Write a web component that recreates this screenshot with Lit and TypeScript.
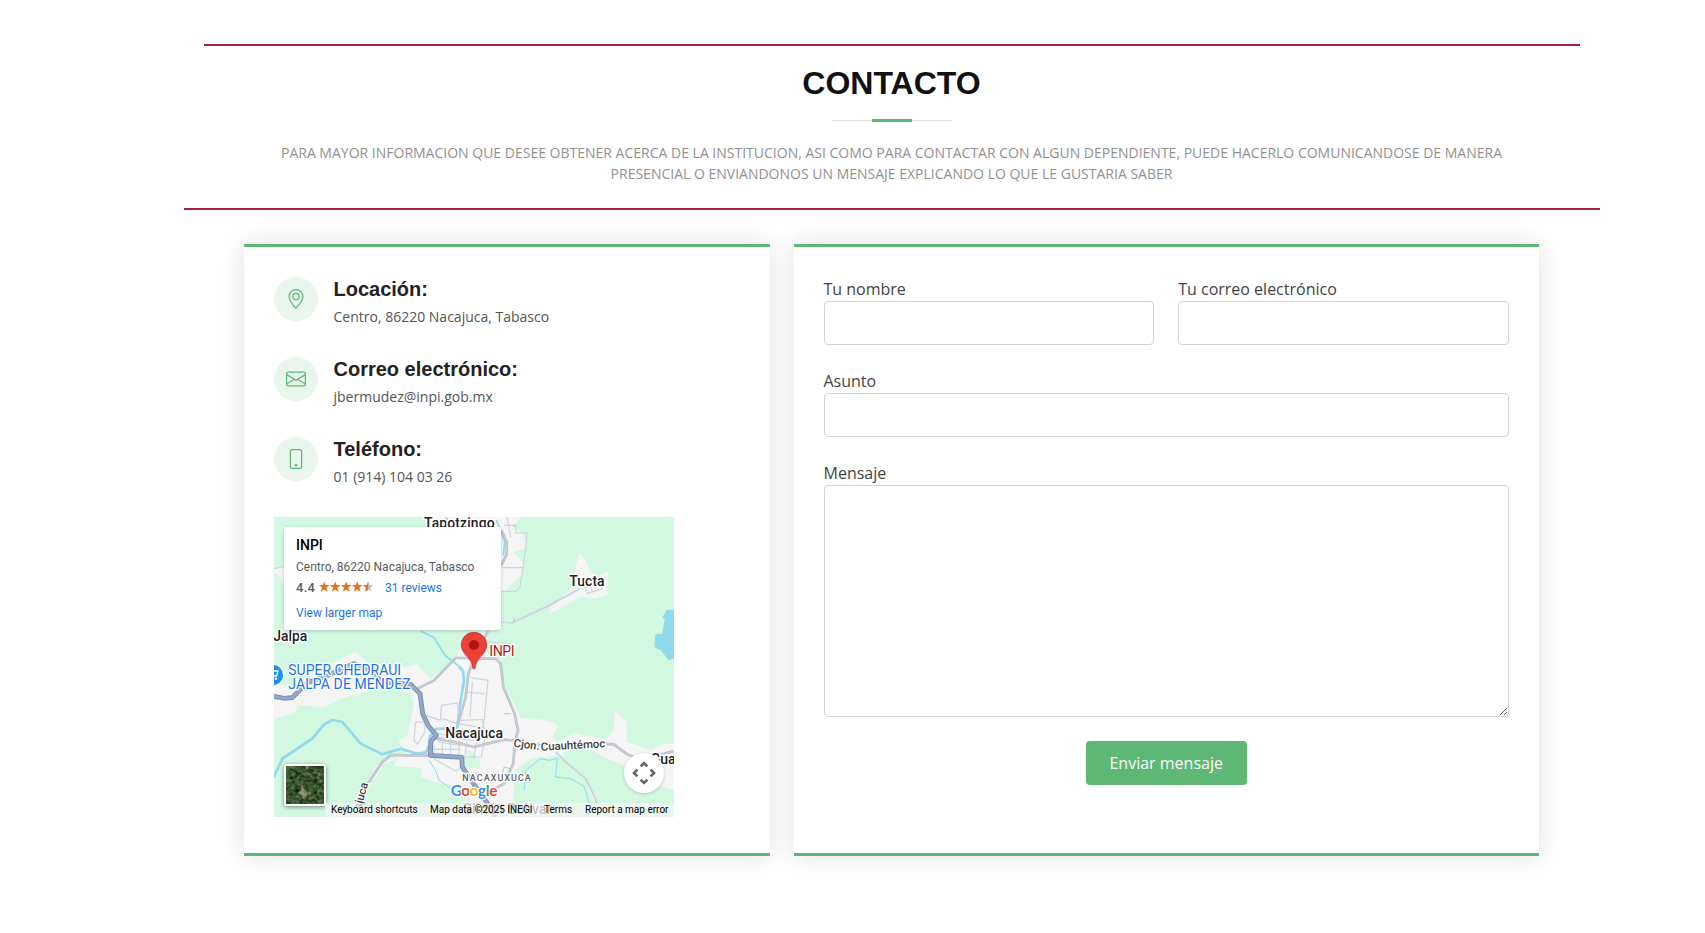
import { LitElement, html, css, svg } from "lit";
import { customElement } from "lit/decorators.js";

@customElement("location-map")
class LocationMap extends LitElement {
  static styles = css`
    :host { display: block; position: relative; width: 400px; height: 300px; overflow: hidden; background: #d2f8e2; font-family: Roboto, sans-serif; }
    .canvas { display: block; width: 400px; height: 300px; }
    .info { position: absolute; left: 10px; top: 10px; width: 217px; height: 103px; box-sizing: border-box; padding: 11px 12px; background: #fff; border-radius: 2px; box-shadow: 0 1px 4px -1px rgba(0,0,0,.3); font-size: 12px; line-height: 14px; color: #5b5b5b; white-space: nowrap; }
    .name { font-size: 14px; line-height: 15px; font-weight: 500; color: #000; }
    .addr { margin-top: 7px; line-height: 15px; }
    .rating { display: flex; align-items: center; margin-top: 6px; height: 14px; }
    .score { font-size: 13px; font-weight: 500; letter-spacing: .3px; width: 23px; }
    .stars { width: 55px; height: 12px; margin-right: 11px; margin-top: -2px; }
    .link { color: #1a73e8; }
    .larger { margin-top: 11px; }
    .thumb { position: absolute; left: 10px; top: 247px; width: 38px; height: 38px; border: 2px solid #fff; border-radius: 2px; box-shadow: 0 1px 4px rgba(0,0,0,.45); }
    .thumb svg { display: block; }
    .pan { position: absolute; left: 350px; top: 236px; width: 40px; height: 40px; border-radius: 50%; background: #fff; box-shadow: 0 1px 4px -1px rgba(0,0,0,.3); }
    .pan svg { display: block; }
    .legal { position: absolute; right: 0; bottom: 0; height: 14px; display: flex; font-size: 10px; line-height: 14px; color: #000; }
    .legal span { padding: 0 6px; background: rgba(245,245,245,.7); white-space: nowrap; box-sizing: border-box; }
    .w1 { width: 99px; } .w2 { width: 114px; } .w3 { width: 41px; } .w4 { width: 95px; }
    .land { fill: #f5f5f5; }
    .water { fill: #90daee; }
    .river { fill: none; stroke: #90daee; stroke-width: 8; stroke-linejoin: round; }
    .stream { fill: none; stroke: #90daee; stroke-width: 3; }
    .street { fill: none; stroke: #ccd5df; stroke-width: 3.5; stroke-linejoin: round; }
    .road { fill: none; stroke: #b6bcc7; stroke-width: 8; stroke-linejoin: round; }
    .roadin { fill: none; stroke: #c9ced6; stroke-width: 4; stroke-linejoin: round; }
    .main { fill: none; stroke: #7186ad; stroke-width: 14; stroke-linejoin: round; }
    .mainin { fill: none; stroke: #95a8ca; stroke-width: 9; stroke-linejoin: round; }
    .town { font: 500 42px Roboto, sans-serif; fill: #202124; stroke: #fff; stroke-width: 9; stroke-linejoin: round; paint-order: stroke; }
    .roadname { font: 500 34px Roboto, sans-serif; fill: #3c4043; stroke: #fff; stroke-width: 8; paint-order: stroke; }
    .area { font: 500 27px Roboto, sans-serif; letter-spacing: 3.1px; fill: #5b6168; stroke: #fff; stroke-width: 7; paint-order: stroke; }
    .shop { font: 400 42px Roboto, sans-serif; fill: #1a73e8; stroke: #fff; stroke-width: 8; stroke-linejoin: round; paint-order: stroke; }
    .place { font: 400 43px Roboto, sans-serif; fill: #b31412; stroke: #fff; stroke-width: 8; stroke-linejoin: round; paint-order: stroke; }
    .brand { font: 500 46px Lato, sans-serif; font-weight: 700; stroke: #fff; stroke-width: 7; stroke-linejoin: round; paint-order: stroke; }
  `;

  private star(x: number, color = "#e7711b") {
    return svg`<path transform="translate(${x} 0)" fill=${color} d="M5.2 .4 6.6 4.1H10.5L7.4 6.7 8.6 10.8 5.2 8.4 1.8 10.8 3 6.7 0 4.1H3.8Z"/>`;
  }

  render() {
    return html`
      <svg class="canvas" viewBox="0 0 1200 900">
        <g class="land">
          <path d="M470 0H740L715 30 745 48 760 90 720 105 750 140 745 170 690 225H640V120H540Z"/>
          <path d="M918 108 935 130 945 158 970 180 1004 162 998 215 1002 232 970 245 920 240 870 268 823 292 830 270 880 225 900 200 903 150Z"/>
          <path d="M0 155 30 148V195L20 180 0 168Z"/>
          <path d="M0 508 60 505 150 450 245 403 285 440 400 450 430 442 470 485 545 425 560 395 600 370 640 340 640 410 680 430 690 500 740 603 800 607 845 620 850 630 835 660 850 675 900 648 995 668 1020 640 1022 580 1058 615 1060 675 1130 700 1170 680H1200V820L1160 810 1080 790 1050 745 1000 725 930 685 870 705 865 720 920 775 965 840 990 900H930L900 840 850 800 780 760 740 770 720 900H600L580 810 500 800 440 780 445 752 360 748 370 725 330 740 280 820 250 860 270 810 310 745 400 705 380 680 372 672 400 655 420 560 410 530 340 510 250 530 190 550 150 570 75 565 60 590 0 605Z"/>
        </g>
        <path fill="#d2f8e2" d="M578 700 600 708 605 724H618V755L565 750 570 722H580ZM860 715 895 728 935 790 980 900H715L722 760 770 725Z"/>
        <path class="water" d="M1180 278H1200V425L1184 430 1160 400 1141 390 1144 352 1165 350 1172 308 1165 300Z"/>
        <path class="river" d="M0 780 25 725 70 695 115 665 150 622 175 609 205 615 260 680 325 712 380 695 430 710 457 706 465 685 467 660 485 636 550 633 556 575 570 490 567 462 555 450"/>
        <path class="river" style="stroke-width:5" d="M440 342 480 362 512 414 563 454M515 0 524 15M668 10 692 75 688 115"/>
        <path class="stream" d="M465 730 485 760 495 790 525 810M750 820 755 760 800 725 825 730 850 724M850 724 845 780 890 785 930 808 945 855M685 768 690 750 710 755V780L690 790"/>
        <g class="street">
          <path d="M690 25H725V48H758L756 90 738 210 725 223H682M682 152H750M699 0 710 60M680 315 710 318M590 482 642 490 628 632 550 620M575 525 632 530M595 495 588 600M553 610 628 608M500 610 502 565 550 558 555 592M500 610 455 595 450 625M505 605 550 620M425 614 455 616 450 650 430 682 420 670 425 614M480 645 530 660M490 660 610 670M490 675 560 685M480 685V715M505 680V720M530 675V730M480 697H560M555 670V720M580 660 570 740M610 650 600 725M480 725 545 763 560 750M625 610 635 650 622 720H570"/>
          <path d="M0 155 32 148M932 210 940 230 985 215M950 207 955 227M640 375 708 380M690 590H710"/>
          <path style="stroke-width:6" d="M918 215 875 238 820 268 710 319M720 302V316M845 705 875 735 935 785 955 825 970 860"/>
        </g>
        <path class="road" d="M682 40 698 75V112L682 145M642 342 630 365M600 425H665L680 440 688 510 722 590 732 640 722 680 718 740 690 800 655 820M600 425 583 470 575 540 550 628M600 423H545L480 490 432 514M467 716 400 715 350 714 325 735 283 798 270 830 250 890M485 665 540 675 600 690 640 680 690 668 735 672M735 672 850 695M985 680 1020 682 1060 712 1120 738M1150 715 1200 702"/>
        <path class="roadin" d="M682 40 698 75V112L682 145M642 342 630 365M600 425H665L680 440 688 510 722 590 732 640 722 680 718 740 690 800 655 820M600 425 583 470 575 540 550 628M600 423H545L480 490 432 514M467 716 400 715 350 714 325 735 283 798 270 830 250 890M485 665 540 675 600 690 640 680 690 668 735 672M735 672 850 695M985 680 1020 682 1060 712 1120 738M1150 715 1200 702"/>
        <path class="main" d="M0 538 30 544 55 542 100 497 165 474 205 455 240 440 285 458 325 495 410 502 438 530 446 590 464 628 487 655 471 672 469 715 563 721 565 750 595 795 640 858 665 900"/>
        <path class="mainin" d="M0 538 30 544 55 542 100 497 165 474 205 455 240 440 285 458 325 495 410 502 438 530 446 590 464 628 487 655 471 672 469 715 563 721 565 750 595 795 640 858 665 900"/>
        <text class="town" x="450" y="33" textLength="212">Tapotzingo</text>
        <text class="town" x="886" y="208" textLength="106">Tucta</text>
        <text class="town" x="-2" y="373" textLength="102">Jalpa</text>
        <text class="town" x="514" y="664" textLength="173">Nacajuca</text>
        <text class="town" x="1130" y="742">Gua</text>
        <text class="roadname" x="261" y="879" transform="rotate(-75 261 879)">ajuca</text>
        <text class="roadname" x="718" y="689" transform="rotate(7 718 689)">Cjon.</text>
        <text class="roadname" x="801" y="701" transform="rotate(-3 801 701)">Cuauhtémoc</text>
        <text class="area" x="565" y="793">NACAXUXUCA</text>
        <text class="town" x="568" y="890" textLength="265" opacity=".8">Simón Bolívar</text>
        <text class="shop" x="43" y="475" textLength="338">SUPER CHEDRAUI</text>
        <text class="shop" x="43" y="517" textLength="367">JALPA DE MENDEZ</text>
        <circle cx="-4" cy="475" r="36" fill="#fff"/><path d="M-25 500H24L2 523Z" fill="#fff"/>
        <circle cx="-4" cy="474" r="31" fill="#1593f5"/>
        <path d="M-10 462H12L8 477H-8" fill="none" stroke="#fff" stroke-width="4"/><circle cx="6" cy="485" r="3.5" fill="#fff"/>
        <path fill="#ea4335" stroke="#c5221f" stroke-width="2" d="M600 346C578 346 562 363 562 384C562 413 594 420 597 455H603C606 420 638 413 638 384C638 363 622 346 600 346Z"/>
        <circle cx="600" cy="384" r="15" fill="#b31412"/>
        <text class="place" x="646" y="418" textLength="76">INPI</text>
        <text class="brand" x="530" y="836" textLength="140"><tspan fill="#4285f4">G</tspan><tspan fill="#ea4335">o</tspan><tspan fill="#fbbc04">o</tspan><tspan fill="#4285f4">g</tspan><tspan fill="#34a853">l</tspan><tspan fill="#ea4335">e</tspan></text>
      </svg>
      <div class="info">
        <div class="name">INPI</div>
        <div class="addr">Centro, 86220 Nacajuca, Tabasco</div>
        <div class="rating">
          <span class="score">4.4</span>
          <svg class="stars" viewBox="0 0 55 12">
            ${[0, 11, 22, 33].map((x) => this.star(x))}
            ${this.star(44, "#c5c5c5")}
            <path fill="#e7711b" d="M49.2 .4V8.4L45.8 10.8 47 6.7 44 4.1H47.8Z"/>
          </svg>
          <span class="link">31 reviews</span>
        </div>
        <div class="larger link">View larger map</div>
      </div>
      <div class="thumb">
        <svg width="38" height="38" viewBox="0 0 38 38">
          <filter id="terrain" x="0" y="0" width="100%" height="100%" color-interpolation-filters="sRGB">
            <feTurbulence type="fractalNoise" baseFrequency=".22 .3" numOctaves="4" seed="8"/>
            <feColorMatrix values=".5 .3 0 0 -.18  .35 .4 0 0 -.05  .3 .3 0 0 -.12  0 0 0 0 1"/>
          </filter>
          <rect width="38" height="38" filter="url(#terrain)"/>
          <path d="M16 18 18 23 22 26 20 31 17 33 15 29 12 27 15 24ZM19 0H24L21 4ZM32 6 35 9 33 10Z" fill="#b9ac91" opacity=".6"/>
        </svg>
      </div>
      <div class="pan">
        <svg width="40" height="40" viewBox="0 0 40 40" fill="none" stroke="#666" stroke-width="2.6">
          <path d="M16.6 13.4 20 10 23.4 13.4M16.6 26.6 20 30 23.4 26.6M13.4 16.6 10 20 13.4 23.4M26.6 16.6 30 20 26.6 23.4"/>
        </svg>
      </div>
      <div class="legal">
        <span class="w1">Keyboard shortcuts</span><span class="w2">Map data ©2025 INEGI</span><span class="w3">Terms</span><span class="w4">Report a map error</span>
      </div>
    `;
  }
}

@customElement("app-root")
class AppRoot extends LitElement {
  static styles = css`
    :host { display: block; width: 1705px; height: 933px; overflow: hidden; background: #fff; font-family: "Open Sans", sans-serif; font-size: 16px; line-height: 24px; color: #444; }
    * { box-sizing: border-box; }
    .head { width: 1376px; margin: 0 0 0 203.5px; padding-top: 44px; height: 208px; text-align: center; }
    .rule { height: 2px; background: #9f2241; }
    h2 { margin: 18px 0 0; font: 700 32px/38px "Liberation Sans", sans-serif; color: #111; }
    .divider { display: flex; align-items: center; width: 120px; height: 3px; margin: 17px auto 20px; background: linear-gradient(#ddd, #ddd) 0 1px / 100% 1px no-repeat; }
    .divider i { width: 40px; height: 3px; margin: 0 auto; background: #5cb874; }
    .lead { margin: 0 60px; font-size: 14px; line-height: 21px; color: #919191; }
    .rule.wide { width: 1416px; margin-left: 184px; }
    .row { display: flex; gap: 24px; margin: 34px 0 0 243.5px; height: 612px; }
    .card { border-top: 3px solid #5cb874; border-bottom: 3px solid #5cb874; padding: 30px; background: #fff; box-shadow: 0 0 24px 0 rgba(0,0,0,.12); }
    .left { width: 526px; }
    .right { width: 745.4px; }
    .item { display: flex; gap: 16px; height: 80px; }
    .bubble { display: flex; align-items: center; justify-content: center; width: 44px; height: 44px; border-radius: 50%; background: #eaf6ed; color: #5cb874; }
    h4 { margin: 0 0 5px; font: 700 20px/24px "Liberation Sans", sans-serif; color: #222; }
    .item p { margin: 0; font-size: 14px; line-height: 21px; color: #555; }
    location-map { margin-left: .5px; }
    form { display: grid; grid-template-columns: 1fr 1fr; column-gap: 24px; row-gap: 24px; }
    label { display: flex; flex-direction: column; }
    .full { grid-column: 1 / -1; }
    input, textarea { display: block; width: 100%; height: 44px; margin: 0; border: 1px solid #ced4da; border-radius: 4px; background: #fff; outline: none; }
    textarea { height: 232px; resize: vertical; }
    button { justify-self: center; grid-column: 1 / -1; height: 44px; width: 161px; padding: 0; border: 0; border-radius: 4px; background: #5cb874; color: #fff; font: 400 16px/24px "Open Sans", sans-serif; }
  `;

  private icons = {
    pin: svg`<path d="M12.166 8.94c-.524 1.062-1.234 2.12-1.96 3.07A31.493 31.493 0 0 1 8 14.58a31.481 31.481 0 0 1-2.206-2.57c-.726-.95-1.436-2.008-1.96-3.07C3.304 7.867 3 6.862 3 6a5 5 0 0 1 10 0c0 .862-.305 1.867-.834 2.94zM8 16s6-5.686 6-10A6 6 0 0 0 2 6c0 4.314 6 10 6 10z"/><path d="M8 8a2 2 0 1 1 0-4 2 2 0 0 1 0 4zm0 1a3 3 0 1 0 0-6 3 3 0 0 0 0 6z"/>`,
    mail: svg`<path d="M0 4a2 2 0 0 1 2-2h12a2 2 0 0 1 2 2v8a2 2 0 0 1-2 2H2a2 2 0 0 1-2-2V4Zm2-1a1 1 0 0 0-1 1v.217l7 4.2 7-4.2V4a1 1 0 0 0-1-1H2Zm13 2.383-4.708 2.825L15 11.105V5.383Zm-.034 6.876-5.64-3.471L8 9.583l-1.326-.795-5.64 3.47A1 1 0 0 0 2 13h12a1 1 0 0 0 .966-.741ZM1 11.105l4.708-2.897L1 5.383v5.722Z"/>`,
    phone: svg`<path d="M11 1a1 1 0 0 1 1 1v12a1 1 0 0 1-1 1H5a1 1 0 0 1-1-1V2a1 1 0 0 1 1-1h6zM5 0a2 2 0 0 0-2 2v12a2 2 0 0 0 2 2h6a2 2 0 0 0 2-2V2a2 2 0 0 0-2-2H5z"/><path d="M8 14a1 1 0 1 0 0-2 1 1 0 0 0 0 2z"/>`,
  };

  private item(icon: unknown, title: string, text: string) {
    return html`<div class="item">
      <span class="bubble"><svg width="20" height="20" viewBox="0 0 16 16" fill="currentColor">${icon}</svg></span>
      <div><h4>${title}</h4><p>${text}</p></div>
    </div>`;
  }

  render() {
    return html`
      <header class="head">
        <div class="rule"></div>
        <h2>CONTACTO</h2>
        <div class="divider"><i></i></div>
        <p class="lead">PARA MAYOR INFORMACION QUE DESEE OBTENER ACERCA DE LA INSTITUCION, ASI COMO PARA CONTACTAR CON ALGUN DEPENDIENTE, PUEDE HACERLO COMUNICANDOSE DE MANERA PRESENCIAL O ENVIANDONOS UN MENSAJE EXPLICANDO LO QUE LE GUSTARIA SABER</p>
      </header>
      <div class="rule wide"></div>
      <main class="row">
        <section class="card left">
          ${this.item(this.icons.pin, "Locación:", "Centro, 86220 Nacajuca, Tabasco")}
          ${this.item(this.icons.mail, "Correo electrónico:", "jbermudez@inpi.gob.mx")}
          ${this.item(this.icons.phone, "Teléfono:", "01 (914) 104 03 26")}
          <location-map></location-map>
        </section>
        <section class="card right">
          <form>
            <label>Tu nombre<input type="text" /></label>
            <label>Tu correo electrónico<input type="email" /></label>
            <label class="full">Asunto<input type="text" /></label>
            <label class="full">Mensaje<textarea></textarea></label>
            <button type="button">Enviar mensaje</button>
          </form>
        </section>
      </main>
    `;
  }
}
